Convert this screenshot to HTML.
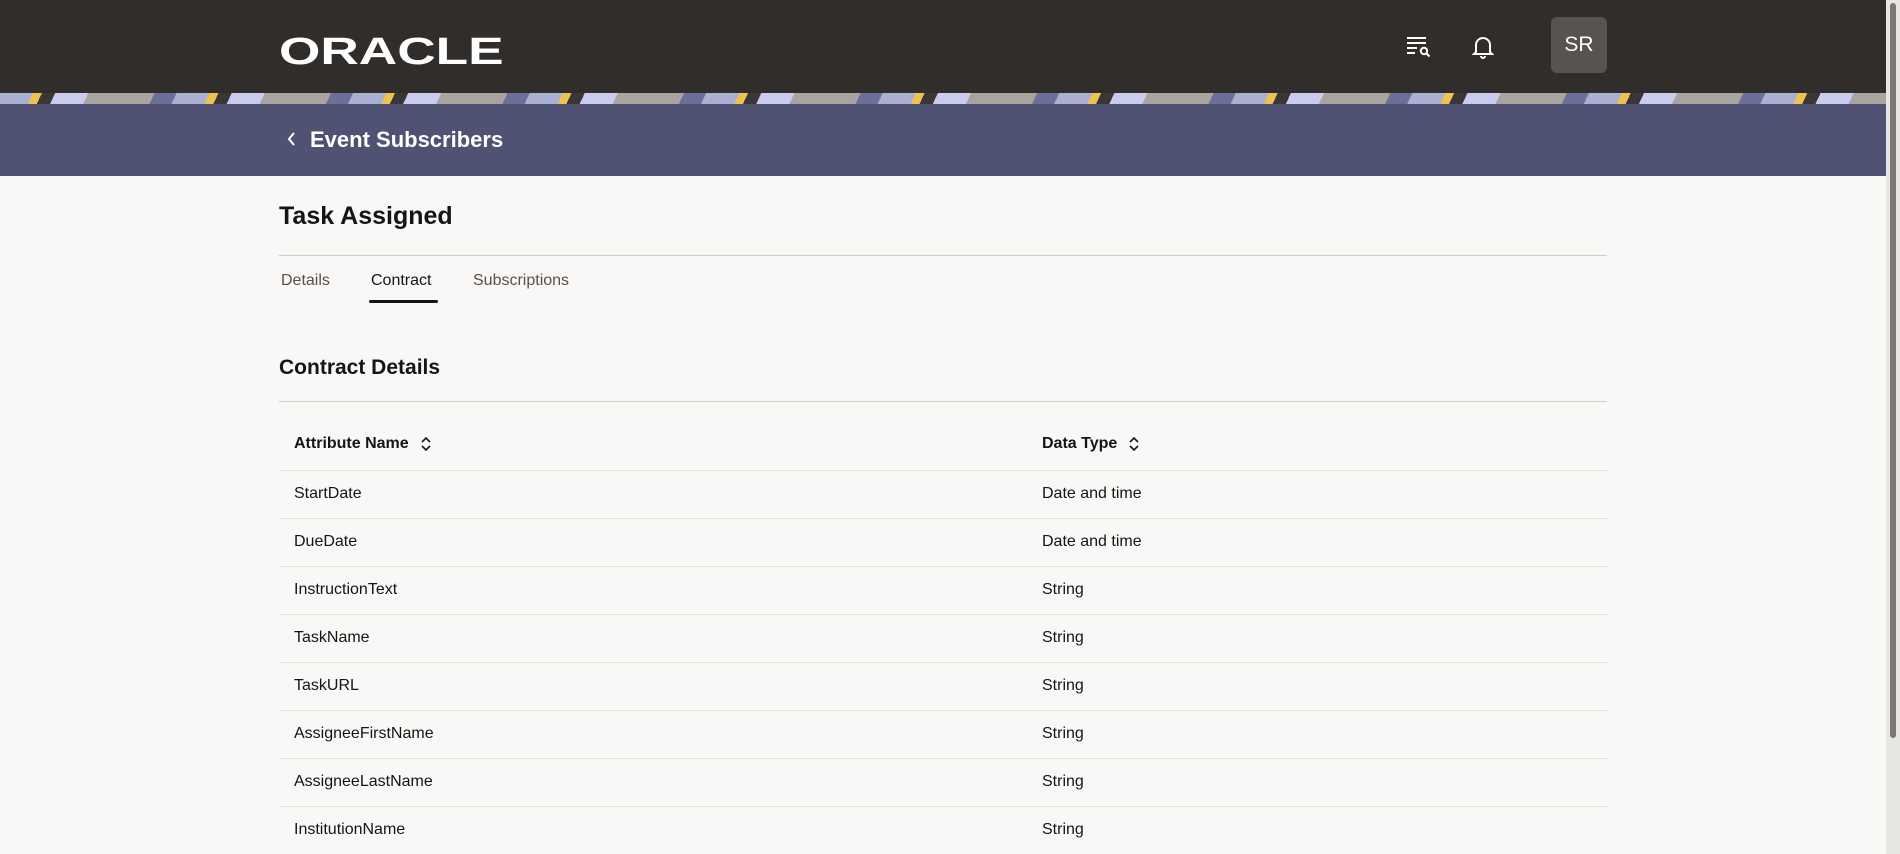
<!DOCTYPE html>
<html><head><meta charset="utf-8"><style>
*{margin:0;padding:0;box-sizing:border-box}
body{width:1900px;height:854px;overflow:hidden;background:#f9f8f6;font-family:"Liberation Sans",sans-serif;color:#161513;position:relative}
.hdr{position:absolute;left:0;top:0;width:1886px;height:93px;background:#312d2a}
.stripe{position:absolute;left:0;top:93px;width:1886px;height:11px;background:repeating-linear-gradient(115deg,#aab0d4 0 30px,#f0c050 30px 38px,#3a3634 38px 50px,#c9ccee 50px 80px,#a8a4a0 80px 140px,#6c6f98 140px 160px)}
.band{position:absolute;left:0;top:104px;width:1886px;height:72px;background:#4f5273}
.sb{position:absolute;right:0;top:0;width:14px;height:854px;background:#e8e6e3}
.sb i{position:absolute;left:4px;top:3px;width:6px;height:735px;background:#7a7774;border-radius:3px}
.abs{position:absolute}
.logo{left:279px;top:31px;color:#fff;font-size:38px;letter-spacing:0px;font-weight:bold;transform:scaleX(1.40);transform-origin:left}
.av{left:1551px;top:17px;width:56px;height:56px;background:#57534f;border-radius:6px;color:#fff;font-size:21px;text-align:center;line-height:56px}
.line{position:absolute;left:279px;width:1328px;height:1px;background:#cfcdca}
.tab{position:absolute;top:272px;font-size:16px;color:#55514e}
.th{position:absolute;font-size:16px;font-weight:bold}
.td{position:absolute;font-size:16px}
</style></head><body>
<div class="hdr"></div><div class="stripe"></div><div class="band"></div>
<div class="abs logo">ORACLE</div>
<svg class="abs" style="left:1406px;top:36px" width="26" height="22" viewBox="0 0 26 22" fill="none" stroke="#fff" stroke-width="2"><path d="M1 2h19M1 7h19M1 12h10M1 17h8"/><circle cx="18" cy="15" r="3.2"/><path d="M20.5 17.5l3 3"/></svg>
<svg class="abs" style="left:1472px;top:35px" width="22" height="24" viewBox="0 0 22 24" fill="none" stroke="#fff" stroke-width="2"><path d="M4 17V10a7 7 0 0 1 14 0v7l2 2H2z"/><path d="M9 21a2 2 0 0 0 4 0"/></svg>
<div class="abs av">SR</div>
<svg class="abs" style="left:286px;top:131px" width="12" height="16" viewBox="0 0 12 16" fill="none" stroke="#fff" stroke-width="2"><path d="M8 2L3 8l5 6"/></svg>
<div class="abs" style="left:310px;top:127px;color:#fff;font-size:22px;font-weight:bold">Event Subscribers</div>
<div class="abs" style="left:279px;top:202px;font-size:25px;font-weight:bold">Task Assigned</div>
<div class="line" style="top:255px"></div>
<div class="tab" style="left:281px">Details</div>
<div class="tab" style="left:371px;color:#161513">Contract</div>
<div class="tab" style="left:473px">Subscriptions</div>
<div class="abs" style="left:369px;top:300px;width:69px;height:3px;background:#161513;border-radius:2px"></div>
<div class="abs" style="left:279px;top:356px;font-size:21px;font-weight:bold">Contract Details</div>
<div class="line" style="top:401px"></div>
<div class="th" style="left:294px;top:435px">Attribute Name</div>
<svg class="abs" style="left:420px;top:435px" width="12" height="18" viewBox="0 0 12 18" fill="none" stroke="#161513" stroke-width="1.6"><path d="M2 7l4-4 4 4M2 11l4 4 4-4"/></svg>
<div class="th" style="left:1042px;top:435px">Data Type</div>
<svg class="abs" style="left:1128px;top:435px" width="12" height="18" viewBox="0 0 12 18" fill="none" stroke="#161513" stroke-width="1.6"><path d="M2 7l4-4 4 4M2 11l4 4 4-4"/></svg>
<div class="line" style="top:470px;background:#e2e0dd"></div>
<div class="td" style="left:294px;top:485px">StartDate</div><div class="td" style="left:1042px;top:485px">Date and time</div>
<div class="line" style="top:518px;background:#e2e0dd"></div>
<div class="td" style="left:294px;top:533px">DueDate</div><div class="td" style="left:1042px;top:533px">Date and time</div>
<div class="line" style="top:566px;background:#e2e0dd"></div>
<div class="td" style="left:294px;top:581px">InstructionText</div><div class="td" style="left:1042px;top:581px">String</div>
<div class="line" style="top:614px;background:#e2e0dd"></div>
<div class="td" style="left:294px;top:629px">TaskName</div><div class="td" style="left:1042px;top:629px">String</div>
<div class="line" style="top:662px;background:#e2e0dd"></div>
<div class="td" style="left:294px;top:677px">TaskURL</div><div class="td" style="left:1042px;top:677px">String</div>
<div class="line" style="top:710px;background:#e2e0dd"></div>
<div class="td" style="left:294px;top:725px">AssigneeFirstName</div><div class="td" style="left:1042px;top:725px">String</div>
<div class="line" style="top:758px;background:#e2e0dd"></div>
<div class="td" style="left:294px;top:773px">AssigneeLastName</div><div class="td" style="left:1042px;top:773px">String</div>
<div class="line" style="top:806px;background:#e2e0dd"></div>
<div class="td" style="left:294px;top:821px">InstitutionName</div><div class="td" style="left:1042px;top:821px">String</div>
<div class="sb"><i></i></div>
</body></html>
